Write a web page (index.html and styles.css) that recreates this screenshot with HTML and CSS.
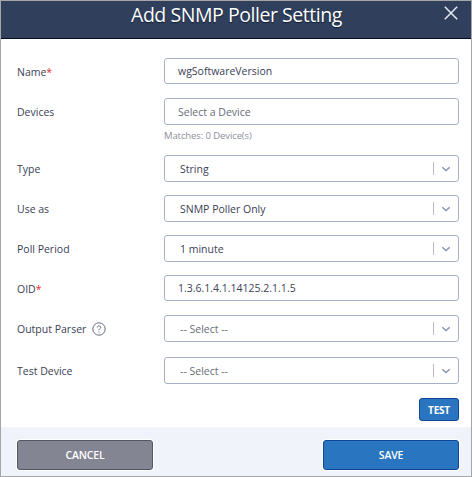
FILE: index.html
```html
<!DOCTYPE html>
<html lang="en">
<head>
<meta charset="utf-8">
<title>Add SNMP Poller Setting</title>
<link rel="stylesheet" href="styles.css">
</head>
<body>
<svg width="0" height="0" class="defs"><symbol id="chevron" viewBox="0 0 10 8"><path d="M1.300 2.200 5 5.600 8.700 2.200" fill="none" stroke="#8791b5" stroke-width="1.400"/></symbol></svg>
<div class="dialog">
  <header class="header">
    <h1 class="title">Add SNMP Poller Setting</h1>
    <svg class="close" viewBox="0 0 14 14"><path d="M.8.8 13.200 13.200M13.200.8.8 13.200" fill="none" stroke="#e6ebf5" stroke-width="1.5"/></svg>
  </header>
  <main class="form">
    <div class="row row-name"><label class="label">Name<span class="req">*</span></label><div class="field"><span>wgSoftwareVersion</span></div></div>
    <div class="row"><label class="label">Devices</label><div class="field muted"><span>Select a Device</span></div></div>
    <div class="hint">Matches: 0 Device(s)</div>
    <div class="row"><label class="label">Type</label><div class="field select"><span>String</span><i class="sep"></i><svg class="chev"><use href="#chevron"/></svg></div></div>
    <div class="row"><label class="label">Use as</label><div class="field select"><span>SNMP Poller Only</span><i class="sep"></i><svg class="chev"><use href="#chevron"/></svg></div></div>
    <div class="row"><label class="label">Poll Period</label><div class="field select"><span>1 minute</span><i class="sep"></i><svg class="chev"><use href="#chevron"/></svg></div></div>
    <div class="row row-oid"><label class="label">OID<span class="req">*</span></label><div class="field"><span>1.3.6.1.4.1.14125.2.1.1.5</span></div></div>
    <div class="row row-parser"><label class="label">Output Parser<svg class="help" viewBox="0 0 14 14"><circle cx="7" cy="7" r="6.200" fill="none" stroke="#656b7c" stroke-width="1"/><path d="M5.200 5.500C5.300 3.300 8.800 3.400 8.700 5.400 8.600 6.700 7 6.700 7 8.300M7 9.400V10.500" fill="none" stroke="#656b7c" stroke-width="1"/></svg></label><div class="field select muted"><span>-- Select --</span><i class="sep"></i><svg class="chev"><use href="#chevron"/></svg></div></div>
    <div class="row row-test"><label class="label">Test Device</label><div class="field select muted"><span>-- Select --</span><i class="sep"></i><svg class="chev"><use href="#chevron"/></svg></div></div>
    <button class="btn test">TEST</button>
  </main>
  <footer class="footer">
    <button class="btn cancel">CANCEL</button>
    <button class="btn save">SAVE</button>
  </footer>
</div>
</body>
</html>
```

FILE: styles.css
```css
* { box-sizing: border-box; }
body { margin: 0; font: 10.5px/16px "Open Sans", sans-serif; color: #3a4156; }
.defs { position: absolute; }
.dialog { width: 472px; height: 477px; border: 1px solid #a6a6a6; background: #fff; display: flex; flex-direction: column; overflow: hidden; }
.header { height: 38px; flex: none; background: #30405c; border-bottom: 1px solid #080c18; display: flex; justify-content: space-between; padding: 0 13px 0 130px; }
.title { margin: 0; font-size: 19.5px; line-height: 27px; letter-spacing: -0.45px; font-weight: 400; color: #fff; white-space: nowrap; text-shadow: 0 1px 1px #101a30; }
.close { width: 14px; height: 14px; margin-top: 5px; }
.form { flex: 1; padding: 19px 12px 0 16px; display: flex; flex-direction: column; }
.row { display: flex; align-items: center; height: 27px; margin-bottom: 13px; flex: none; }
.row-name { height: 26px; margin-bottom: 14px; }
.row-oid { height: 26px; margin-bottom: 14px; }
.row-parser { margin-bottom: 15px; }
.row-test { margin-bottom: 14px; }
.label { width: 147px; flex: none; display: flex; align-items: center; padding-top: 1px; }
.req { color: #e62828; }
.help { width: 14px; height: 14px; margin-left: 6px; }
.field { flex: 1; align-self: stretch; border: 1px solid #a9b0cb; border-radius: 3px; background: #fff; display: flex; align-items: center; padding: 0 7px 0 13px; white-space: nowrap; }
.select { padding-left: 15px; }
.muted { color: #686c78; }
.sep { width: 1px; height: 13px; background: #b9bdc8; margin-left: auto; margin-right: 7px; }
.chev { width: 10px; height: 8px; margin-top: 1px; }
.hint { height: 17px; margin: -11px 0 11px 147px; font-size: 9.5px; line-height: 17px; letter-spacing: -0.1px; color: #8d909b; flex: none; }
.btn { border: 1px solid #0f4596; border-radius: 3px; background: #2975c0; color: #fff; font: 600 10.5px/16px "Open Sans", sans-serif; letter-spacing: -0.2px; padding: 0; }
.test { align-self: flex-end; width: 40px; height: 23px; font-size: 10px; font-weight: 700; letter-spacing: -0.2px; }
.footer { height: 49px; flex: none; background: #f0f3f9; display: flex; justify-content: space-between; padding: 13px 12px 0 16px; }
.footer .btn { width: 136px; height: 30px; box-shadow: 0 0 0 1px #fff; }
.footer .cancel { background: #848592; border-color: #55556a; }
```
